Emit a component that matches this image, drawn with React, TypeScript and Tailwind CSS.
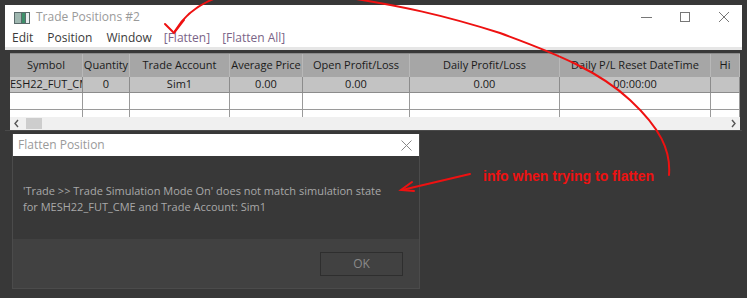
import React from 'react';

const cols = [
  { name: 'Symbol', w: 73, v: 'ESH22_FUT_CM', align: 'left' },
  { name: 'Quantity', w: 47, v: '0' },
  { name: 'Trade Account', w: 100, v: 'Sim1' },
  { name: 'Average Price', w: 73, v: '0.00' },
  { name: 'Open Profit/Loss', w: 107, v: '0.00' },
  { name: 'Daily Profit/Loss', w: 150, v: '0.00' },
  { name: 'Daily P/L Reset DateTime', w: 151, v: '00:00:00' },
  { name: 'Hi', w: 29, v: '', align: 'left' },
];

const font = { fontFamily: '"Open Sans", "DejaVu Sans", sans-serif' };

export default function App() {
  return (
    <div className="relative w-[747px] h-[298px] bg-[#383838] overflow-hidden" style={font}>
      <div className="pt-[5px] pl-[5px]">
        {/* main window */}
        <div className="w-[737px] bg-white">
          <div className="flex items-center h-[24px]">
            <svg width="16" height="12" viewBox="0 0 16 12" className="ml-[9px] mt-[1px]">
              <rect x="0" y="0" width="16" height="12" fill="#5a6b6b" />
              <rect x="1" y="1" width="6" height="10" fill="#9fb7b0" />
              <rect x="8" y="1" width="3" height="10" fill="#3d8f6a" />
              <rect x="12" y="1" width="3" height="10" fill="#e8eef0" />
            </svg>
            <span className="ml-[6px] text-[12px] text-[#9a9a9a]">Trade Positions #2</span>
            <div className="ml-auto flex items-center h-full">
              <svg width="12" height="12" className="mr-[26px]"><line x1="0" y1="6.5" x2="11" y2="6.5" stroke="#777" /></svg>
              <svg width="12" height="12" className="mr-[27px]"><rect x="1.5" y="1.5" width="9" height="9" fill="none" stroke="#777" /></svg>
              <svg width="12" height="12" className="mr-[12px]">
                <line x1="1" y1="1" x2="11" y2="11" stroke="#777" />
                <line x1="11" y1="1" x2="1" y2="11" stroke="#777" />
              </svg>
            </div>
          </div>
          <div className="flex items-center h-[18px] pl-[7px] text-[12px] text-[#3a3a3a]">
            <span>Edit</span>
            <span className="ml-[14px]">Position</span>
            <span className="ml-[14px]">Window</span>
            <span className="ml-[12px] text-[#7a6487]">[Flatten]</span>
            <span className="ml-[12px] text-[#7a6487]">[Flatten All]</span>
          </div>
        </div>
        <div className="w-[737px] h-[3px] bg-[#e6e6e6]" />
      </div>

      {/* grid */}
      <div className="ml-[10px] mt-[3px] w-[730px] text-[11px] text-[#1a1a1a] bg-white">
        <div className="flex h-[24px] bg-[#a6a6a6] border-t border-[#8a8a8a]">
          {cols.map((c) => (
            <div key={c.name} style={{ width: c.w }} className="flex items-center justify-center whitespace-nowrap overflow-hidden border-r border-[#b8b8b8]">
              {c.name}
            </div>
          ))}
        </div>
        <div className="flex h-[16px] bg-[#c3c3c3] border-b border-[#8c8c8c]">
          {cols.map((c) => (
            <div key={c.name} style={{ width: c.w }} className={`flex items-center whitespace-nowrap overflow-hidden border-r border-[#8c8c8c] ${c.align === 'left' ? 'justify-start' : 'justify-center'}`}>
              {c.v}
            </div>
          ))}
        </div>
        <div className="flex h-[17px] border-b border-[#9a9a9a]">
          {cols.map((c) => (
            <div key={c.name} style={{ width: c.w }} className="border-r border-[#9a9a9a]" />
          ))}
        </div>
        <div className="flex h-[7px]">
          {cols.map((c) => (
            <div key={c.name} style={{ width: c.w }} className="border-r border-[#9a9a9a]" />
          ))}
        </div>
        <div className="flex items-center h-[13px] bg-[#f0f0f0]">
          <svg width="14" height="13" viewBox="0 0 14 13"><path d="M8 3 L5 6.5 L8 10" fill="none" stroke="#555" strokeWidth="1.4" /></svg>
          <div className="ml-[2px] w-[16px] h-[11px] bg-[#cdcdcd]" />
          <svg width="14" height="13" viewBox="0 0 14 13" className="ml-auto"><path d="M6 3 L9 6.5 L6 10" fill="none" stroke="#555" strokeWidth="1.4" /></svg>
        </div>
      </div>
      <div className="ml-[5px] w-[737px] h-px bg-[#4a4a4a]" />

      {/* dialog */}
      <div className="ml-[12px] mt-[3px] w-[408px] border border-[#4b4b4b] border-t-0">
        <div className="flex items-center h-[22px] bg-white">
          <span className="ml-[5px] text-[12px] text-[#9a9a9a]">Flatten Position</span>
          <svg width="11" height="11" className="ml-auto mr-[7px]">
            <line x1="0.5" y1="0.5" x2="10.5" y2="10.5" stroke="#888" />
            <line x1="10.5" y1="0.5" x2="0.5" y2="10.5" stroke="#888" />
          </svg>
        </div>
        <div className="h-[83px] bg-[#383838] pl-[10px] pt-[27px] text-[11px] leading-[16px] text-[#a8a8a8]">
          <div>'Trade &gt;&gt; Trade Simulation Mode On' does not match simulation state</div>
          <div>for MESH22_FUT_CME and Trade Account: Sim1</div>
        </div>
        <div className="h-[49px] bg-[#414141] flex items-start justify-end pr-[16px] pt-[13px]">
          <div className="w-[83px] h-[24px] border border-[#2e2e2e] flex items-center justify-center text-[12px] text-[#8a8a8a]">OK</div>
        </div>
      </div>

      {/* annotation */}
      <div className="absolute left-[483px] top-[166px] text-[14px] font-bold text-[#ee1111]" style={{ fontFamily: '"Liberation Sans", Arial, sans-serif' }}>
        info when trying to flatten
      </div>
      <svg className="absolute left-0 top-0 pointer-events-none" width="747" height="298">
        <g fill="none" stroke="#ee1111" strokeWidth="2" strokeLinecap="round">
          <path d="M470 174 L402 190" />
          <path d="M412 182 L401 190 L414 191" />
          <path d="M669 175 C671 150 660 128 630 100 C600 72 560 55 500 33 C440 14 400 6 350 -2" />
          <path d="M216 -2 C200 4 185 14 175 31" />
          <path d="M165 24 L174 33 L184 20" />
        </g>
      </svg>
    </div>
  );
}
